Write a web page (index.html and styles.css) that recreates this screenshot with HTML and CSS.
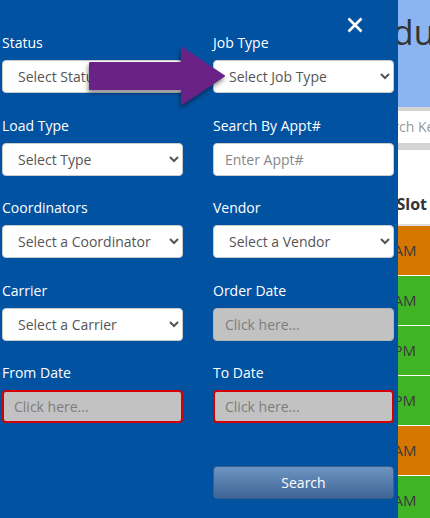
FILE: index.html
```html
<!DOCTYPE html>
<html lang="en">
<head>
<meta charset="utf-8">
<title>Filters</title>
<link rel="stylesheet" href="styles.css">
</head>
<body>
<div class="app">
  <aside class="panel">
    <div class="panel-head">
      <button class="close" type="button" aria-label="Close">
        <svg width="16" height="16" viewBox="0 0 16 16"><path d="M1.5 1.5 L14.5 14.5 M14.5 1.5 L1.5 14.5" stroke="#fff" stroke-width="2.6" stroke-linecap="butt" fill="none"/></svg>
      </button>
    </div>
    <form class="filters">
      <div class="field">
        <label class="lbl">Status</label>
        <select class="ctl"><option>Select Status</option></select>
      </div>
      <div class="field">
        <label class="lbl">Job Type</label>
        <select class="ctl"><option>Select Job Type</option></select>
      </div>
      <div class="field">
        <label class="lbl">Load Type</label>
        <select class="ctl"><option>Select Type</option></select>
      </div>
      <div class="field">
        <label class="lbl">Search By Appt#</label>
        <input class="ctl txt" type="text" placeholder="Enter Appt#">
      </div>
      <div class="field">
        <label class="lbl">Coordinators</label>
        <select class="ctl"><option>Select a Coordinator</option></select>
      </div>
      <div class="field">
        <label class="lbl">Vendor</label>
        <select class="ctl"><option>Select a Vendor</option></select>
      </div>
      <div class="field">
        <label class="lbl">Carrier</label>
        <select class="ctl"><option>Select a Carrier</option></select>
      </div>
      <div class="field">
        <label class="lbl">Order Date</label>
        <input class="ctl txt date" type="text" placeholder="Click here...">
      </div>
      <div class="field">
        <label class="lbl">From Date</label>
        <input class="ctl txt date invalid" type="text" placeholder="Click here...">
      </div>
      <div class="field">
        <label class="lbl">To Date</label>
        <input class="ctl txt date invalid" type="text" placeholder="Click here...">
      </div>
      <div class="field"></div>
      <div class="field btn-cell">
        <button class="search-btn" type="button">Search</button>
      </div>
    </form>
    <svg class="arrow" width="145" height="66" viewBox="0 0 145 66">
      <path d="M5 19 L97 19 L97 4 L139 32 L97 60 L97 45 L5 45 Z" fill="#6a2287" stroke="#6a2287" stroke-width="2" stroke-linejoin="round"/>
    </svg>
  </aside>
  <main class="behind">
    <div class="hdr"><span class="hdr-t">Schedule</span></div>
    <div class="sbar"><div class="sinput"><span class="sph">Search Keyword</span></div></div>
    <div class="th"><span class="th-t">Time Slot</span></div>
    <div class="row orange"><span class="tm">8:00 AM</span></div>
    <div class="row green"><span class="tm">9:00 AM</span></div>
    <div class="row green"><span class="tm">1:00 PM</span></div>
    <div class="row green"><span class="tm">2:00 PM</span></div>
    <div class="row orange"><span class="tm">8:00 AM</span></div>
    <div class="row green"><span class="tm">9:00 AM</span></div>
  </main>
</div>
</body>
</html>
```
FILE: styles.css
```css
* { box-sizing: border-box; }
html, body { margin: 0; padding: 0; }
body {
  width: 430px;
  height: 518px;
  overflow: hidden;
  font-family: "Open Sans", "Noto Sans", sans-serif;
  font-size: 14px;
}
.app {
  display: flex;
  height: 518px;
}
.panel {
  position: relative;
  width: 398px;
  flex: 0 0 398px;
  background: #0252a2;
  height: 100%;
}
.panel-head {
  display: flex;
  justify-content: flex-end;
  padding: 17px 35px 0 0;
  height: 33px;
}
.close {
  width: 16px;
  height: 16px;
  padding: 0;
  border: 0;
  background: none;
  display: block;
}
.close svg { display: block; }
.filters {
  display: grid;
  grid-template-columns: 181px 181px;
  column-gap: 30px;
  row-gap: 22.5px;
  padding-left: 2px;
  margin: 0;
}
.field {
  display: flex;
  flex-direction: column;
}
.lbl {
  color: #fff;
  font-size: 14px;
  line-height: 20px;
  height: 20px;
  margin-bottom: 7px;
}
.ctl {
  height: 33px;
  width: 181px;
  border: 1px solid #ccc;
  border-radius: 4px;
  background-color: #fff;
  font-family: "Open Sans", "Noto Sans", sans-serif;
  font-size: 14px;
  color: #555;
  padding: 0 8px 0 11px;
  margin: 0;
}
.txt {
  padding: 0 11px;
  outline: none;
}
.txt::placeholder { color: #888; opacity: 1; }
.date {
  background-color: #c2c2c2;
  border-color: #b5b5b5;
}
.date::placeholder { color: #7d7d7d; }
.invalid {
  border: 2px solid #d40000;
  padding-left: 10px;
}
.btn-cell { padding-top: 20.5px; }
.search-btn {
  height: 33px;
  width: 181px;
  border: 1px solid #37608f;
  border-radius: 4px;
  background: linear-gradient(#6d95c1, #3f6596);
  color: #fff;
  font-family: "Open Sans", "Noto Sans", sans-serif;
  font-size: 14px;
  padding: 0;
}
.arrow {
  position: absolute;
  left: 85px;
  top: 44px;
  overflow: visible;
  filter: drop-shadow(-1px 3px 2px rgba(0, 0, 0, 0.45));
}
.behind {
  flex: 1;
  overflow: hidden;
  background: #fff;
  color: #333;
  white-space: nowrap;
}
.hdr {
  height: 107px;
  background: #8ab4f2;
  padding-top: 9px;
}
.hdr-t {
  display: block;
  font-size: 34px;
  line-height: 46px;
  color: #333;
  margin-left: -80px;
}
.sbar {
  background: #d4d4d4;
  padding: 4px 0 7px;
}
.sinput {
  height: 32px;
  background: #fff;
  line-height: 32px;
}
.sph {
  display: block;
  color: #999;
  font-size: 14px;
  margin-left: -28px;
}
.th {
  height: 76px;
  border-bottom: 2px solid #ddd;
  padding-top: 43px;
}
.th-t {
  display: block;
  font-weight: bold;
  font-size: 16px;
  line-height: 22px;
  color: #333;
  margin-left: -45px;
}
.row {
  height: 50px;
  border-bottom: 1px solid #fff;
  line-height: 49px;
}
.orange { background: #d67800; }
.green { background: #3fb526; }
.tm {
  display: block;
  font-size: 15px;
  color: #3a3a3a;
  margin-left: -38px;
}
```
